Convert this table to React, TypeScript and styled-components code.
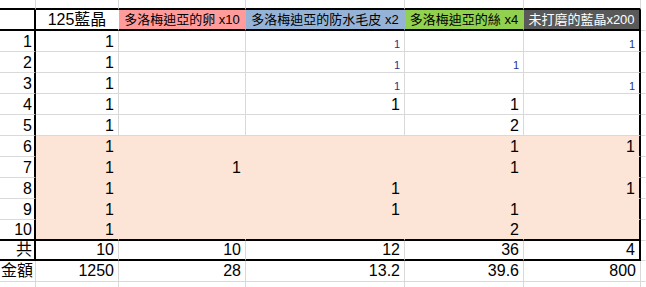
import React from 'react';
import styled, { createGlobalStyle } from 'styled-components';

const GRID = '#d9d9d9';
const INK = '#000';
const PEACH = '#fce4d6';
const COLS = '36px 83px 127px 159px 119px 117px 1fr';

type Line = 'thick' | 'grid' | 'none';

const line = (l: Line = 'grid') =>
  l === 'thick' ? `2px solid ${INK}` : l === 'grid' ? `1px solid ${GRID}` : '1px solid transparent';

const GlobalStyle = createGlobalStyle`
  html, body {
    margin: 0;
    padding: 0;
    background: #fff;
  }
  body {
    font-family: 'Liberation Sans', 'Noto Sans CJK TC', sans-serif;
    color: ${INK};
  }
`;

const Sheet = styled.div`
  width: 646px;
  height: 287px;
  overflow: hidden;
  display: flex;
  flex-direction: column;
`;

const Row = styled.div<{ $h: number }>`
  display: grid;
  grid-template-columns: ${COLS};
  height: ${(p) => p.$h}px;
  flex: none;
`;

const Cell = styled.div<{
  $bg?: string;
  $fg?: string;
  $right?: Line;
  $bottom?: Line;
  $align?: 'flex-start' | 'center' | 'flex-end';
  $valign?: 'center' | 'flex-end';
  $padR?: number;
  $padB?: number;
}>`
  box-sizing: border-box;
  display: flex;
  justify-content: ${(p) => p.$align ?? 'flex-end'};
  align-items: ${(p) => p.$valign ?? 'flex-end'};
  background: ${(p) => p.$bg ?? '#fff'};
  color: ${(p) => p.$fg ?? INK};
  border-right: ${(p) => line(p.$right)};
  border-bottom: ${(p) => line(p.$bottom)};
  padding: 0 ${(p) => p.$padR ?? 4}px ${(p) => p.$padB ?? 1}px 0;
  overflow: hidden;
  white-space: nowrap;
`;

const Num = styled.span<{ $small?: boolean }>`
  font-family: 'Liberation Sans', 'Noto Sans CJK TC', sans-serif;
  font-size: ${(p) => (p.$small ? 11 : 16)}px;
  line-height: 1;
  color: ${(p) => (p.$small ? '#22348a' : INK)};
`;

const HeadText = styled.span<{ $big?: boolean }>`
  font-family: 'Liberation Sans', 'Noto Sans CJK TC', sans-serif;
  font-size: ${(p) => (p.$big ? 16 : 13)}px;
  line-height: 1;
`;

const heads = [
  { text: '125藍晶', bg: '#fff', fg: INK, big: true },
  { text: '多洛梅迪亞的卵 x10', bg: '#ff9b9b', fg: INK },
  { text: '多洛梅迪亞的防水毛皮 x2', bg: '#95b3d7', fg: INK },
  { text: '多洛梅迪亞的絲 x4', bg: '#92d050', fg: INK },
  { text: '未打磨的藍晶x200', bg: '#595959', fg: '#fff' },
];

// '*' marks the smaller blue entries
const body: string[][] = [
  ['1', '', '1*', '', '1*'],
  ['1', '', '1*', '1*', ''],
  ['1', '', '1*', '', '1*'],
  ['1', '', '1', '1', ''],
  ['1', '', '', '2', ''],
  ['1', '', '', '1', '1'],
  ['1', '1', '', '1', ''],
  ['1', '', '1', '', '1'],
  ['1', '', '1', '1', ''],
  ['1', '', '', '2', ''],
];

const totals = ['10', '10', '12', '36', '4'];
const prices = ['1250', '28', '13.2', '39.6', '800'];

const Value = ({ v }: { v: string }) =>
  v ? <Num $small={v.endsWith('*')}>{v.replace('*', '')}</Num> : null;

const Blank = ({ h, bottom }: { h: number; bottom: Line }) => (
  <Row $h={h}>
    {Array.from({ length: 6 }).map((_, i) => (
      <Cell key={i} $bottom={bottom} />
    ))}
    <Cell $right="none" $bottom="none" />
  </Row>
);

export default function App() {
  return (
    <>
      <GlobalStyle />
      <Sheet>
        <Blank h={10} bottom="thick" />

        <Row $h={21}>
          <Cell $right="thick" $bottom="thick" />
          {heads.map((h, i) => (
            <Cell
              key={h.text}
              $bg={h.bg}
              $fg={h.fg}
              $right={i === 4 ? 'thick' : 'none'}
              $bottom="thick"
              $align="center"
              $valign="center"
              $padR={0}
              $padB={0}
            >
              <HeadText $big={h.big}>{h.text}</HeadText>
            </Cell>
          ))}
          <Cell $right="none" />
        </Row>

        {body.map((vals, r) => {
          const shaded = r >= 5;
          const last = r === body.length - 1;
          return (
            <Row key={r} $h={21}>
              <Cell $right="thick" $bottom={last ? 'thick' : 'grid'} $padR={2}>
                <Num>{r + 1}</Num>
              </Cell>
              {vals.map((v, c) => (
                <Cell
                  key={c}
                  $bg={shaded ? PEACH : '#fff'}
                  $right={c === 4 ? 'thick' : shaded ? 'none' : 'grid'}
                  $bottom={last ? 'thick' : shaded ? 'none' : 'grid'}
                >
                  <Value v={v} />
                </Cell>
              ))}
              <Cell $right="none" />
            </Row>
          );
        })}

        <Row $h={20}>
          <Cell $right="thick" $bottom="thick" $padR={2}>
            <Num>共</Num>
          </Cell>
          {totals.map((v, c) => (
            <Cell key={c} $right={c === 4 ? 'thick' : 'grid'} $bottom="thick">
              <Num>{v}</Num>
            </Cell>
          ))}
          <Cell $right="none" />
        </Row>

        <Row $h={21}>
          <Cell $padR={2} $padB={2}>
            <Num>金額</Num>
          </Cell>
          {prices.map((v) => (
            <Cell key={v} $padB={2}>
              <Num>{v}</Num>
            </Cell>
          ))}
          <Cell $right="none" />
        </Row>

        <Blank h={6} bottom="none" />
      </Sheet>
    </>
  );
}
